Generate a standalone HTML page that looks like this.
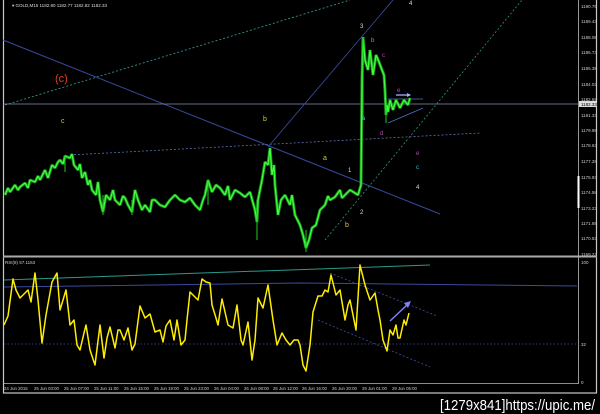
<!DOCTYPE html><html><head><style>body{margin:0;background:#000;width:600px;height:414px;overflow:hidden}svg{display:block}text{font-family:"Liberation Sans",sans-serif}</style></head><body>
<svg width="600" height="414" viewBox="0 0 600 414" xmlns="http://www.w3.org/2000/svg">
<rect width="600" height="414" fill="#000"/>
<rect x="3.5" y="-1" width="593" height="394" fill="none" stroke="#c8c8c8" stroke-width="1.2"/>
<line x1="3" y1="256.5" x2="597" y2="256.5" stroke="#aaa" stroke-width="2"/>
<line x1="578.5" y1="0" x2="578.5" y2="384" stroke="#bbb" stroke-width="0.8"/>
<line x1="3" y1="383.5" x2="578" y2="383.5" stroke="#bbb" stroke-width="0.8"/>
<line x1="578.5" y1="176" x2="578.5" y2="208" stroke="#fff" stroke-width="2"/>
<text x="12" y="7" font-size="4.5" fill="#ddd">▾ GOLD,M15  1182.80 1182.77 1182.82 1182.33</text>
<line x1="5" y1="105" x2="350" y2="0" stroke="#3aa0a0" stroke-width="0.8" stroke-dasharray="2,2"/>
<line x1="3" y1="40" x2="440" y2="214" stroke="#3a4aa0" stroke-width="1"/>
<line x1="3" y1="104" x2="578" y2="104" stroke="#8890b0" stroke-width="0.8"/>
<line x1="70" y1="155" x2="480" y2="133" stroke="#6070b0" stroke-width="0.8" stroke-dasharray="2,2"/>
<line x1="268" y1="147" x2="393" y2="0" stroke="#4050a8" stroke-width="0.8"/>
<line x1="325" y1="240" x2="522" y2="0" stroke="#2a9a6a" stroke-width="0.8" stroke-dasharray="2,2"/>
<line x1="388" y1="99" x2="423" y2="99" stroke="#5070c0" stroke-width="0.8"/>
<line x1="388" y1="123" x2="423" y2="108" stroke="#5070c0" stroke-width="0.8"/>
<line x1="396" y1="95" x2="410" y2="95" stroke="#a0b0ff" stroke-width="1.3"/><path d="M407,93 L411,95 L407,97" fill="#a0b0ff"/>
<g fill="none" stroke-linejoin="bevel">
<polyline stroke="#1a9a1a" stroke-width="3" points="5,195 8,188 10,192 15,185 18,190 20,187 25,183 28,188 30,180 35,182 38,176 40,180 45,170 48,178 52,165 55,168 58,162 60,160 63,164 65,156 70,158 72,154 74,165 78,170 80,164 82,178 85,172 88,185 90,180 92,190 96,195 98,182 100,200 103,212 106,195 110,200 113,190 115,200 120,205 123,196 125,198 128,205 132,212 135,190 138,200 142,210 145,205 150,212 152,200 155,200 160,205 165,207 170,200 175,195 180,200 185,202 190,198 195,205 200,210 203,200 205,195 208,180 212,192 216,185 220,188 225,195 228,186 230,200 235,190 240,193 245,197 250,192 255,210 257,222 258,200 262,180 265,162 268,165 270,148 272,175 274,165 275,185 278,215 281,200 285,195 290,205 292,195 295,215 300,225 303,235 306,248 309,240 312,228 316,225 320,210 325,205 328,196 330,200 335,197 340,190 342,198 345,195 350,190 355,193 358,195 361,185 362,80 363,37 365,60 368,70 370,50 373,75 376,55 379,62 382,70 384,75 385,90 386,115 387,105 388,112 390,100 393,110 396,100 400,108 404,100 408,105 410,98"/>
<polyline stroke="#44ff44" stroke-width="1.2" points="5,195 8,188 10,192 15,185 18,190 20,187 25,183 28,188 30,180 35,182 38,176 40,180 45,170 48,178 52,165 55,168 58,162 60,160 63,164 65,156 70,158 72,154 74,165 78,170 80,164 82,178 85,172 88,185 90,180 92,190 96,195 98,182 100,200 103,212 106,195 110,200 113,190 115,200 120,205 123,196 125,198 128,205 132,212 135,190 138,200 142,210 145,205 150,212 152,200 155,200 160,205 165,207 170,200 175,195 180,200 185,202 190,198 195,205 200,210 203,200 205,195 208,180 212,192 216,185 220,188 225,195 228,186 230,200 235,190 240,193 245,197 250,192 255,210 257,222 258,200 262,180 265,162 268,165 270,148 272,175 274,165 275,185 278,215 281,200 285,195 290,205 292,195 295,215 300,225 303,235 306,248 309,240 312,228 316,225 320,210 325,205 328,196 330,200 335,197 340,190 342,198 345,195 350,190 355,193 358,195 361,185 362,80 363,37 365,60 368,70 370,50 373,75 376,55 379,62 382,70 384,75 385,90 386,115 387,105 388,112 390,100 393,110 396,100 400,108 404,100 408,105 410,98"/>
</g>
<path d="M257,200 V240 M306,230 V252 M363,37 V120 M386,100 V123 M208,180 V205 M65,155 V172 M103,195 V215 M132,200 V215" stroke="#22cc22" stroke-width="1"/>
<text x="55" y="82" font-size="11" fill="#e04020">(c)</text>
<g font-size="7" fill="#cccc44"><text x="61" y="123">c</text><text x="263" y="121">b</text><text x="323" y="160">a</text><text x="345" y="227">b</text></g>
<g font-size="6" fill="#ddd"><text x="348" y="172">1</text><text x="360" y="214">2</text><text x="360" y="28">3</text><text x="416" y="189">4</text><text x="409" y="5">4</text></g>
<g font-size="6" fill="#4bb"><text x="371" y="42">b</text><text x="362" y="120">a</text><text x="416" y="169">c</text></g>
<g font-size="6" fill="#b04cb0"><text x="382" y="57">c</text><text x="380" y="135">d</text><text x="397" y="92">e</text><text x="416" y="155">e</text></g>
<g font-size="4.5" fill="#ccc">
<text x="581" y="8">1190.76</text><text x="581" y="23">1189.43</text><text x="581" y="39">1188.08</text><text x="581" y="54">1186.73</text><text x="581" y="70">1185.38</text><text x="581" y="86">1184.03</text><text x="581" y="101">1182.68</text><text x="581" y="117">1181.33</text><text x="581" y="132">1179.98</text><text x="581" y="147">1178.63</text><text x="581" y="163">1177.28</text><text x="581" y="179">1175.93</text><text x="581" y="194">1174.58</text><text x="581" y="210">1173.23</text><text x="581" y="225">1171.88</text><text x="581" y="240">1170.53</text><text x="581" y="256">1169.23</text>
</g>
<rect x="579" y="101" width="18" height="6" fill="#ddd"/><text x="581" y="106" font-size="4.5" fill="#000">1182.33</text>
<text x="5" y="264" font-size="4.5" fill="#ccc">RSI(8) 57.1163</text>
<line x1="4" y1="280" x2="430" y2="265" stroke="#2a9a8a" stroke-width="1"/>
<polyline fill="none" stroke="#3a4aa0" stroke-width="1" points="4,287 300,283 577,286"/>
<line x1="4" y1="344" x2="578" y2="344" stroke="#4050a0" stroke-width="0.7" stroke-dasharray="1.5,2"/>
<line x1="330" y1="273" x2="437" y2="316" stroke="#4050a0" stroke-width="0.8" stroke-dasharray="2,2"/>
<line x1="318" y1="320" x2="430" y2="367" stroke="#4050a0" stroke-width="0.8" stroke-dasharray="2,2"/>
<line x1="390" y1="321" x2="408" y2="304" stroke="#8080ff" stroke-width="1.5"/><path d="M404,303 L411,301 L408,308 Z" fill="#8080ff"/>
<polyline fill="none" stroke="#ffee00" stroke-width="1.5" stroke-linejoin="round" points="4,325 8,316 13,279 16,290 20,298 24,294 28,290 31,302 35,273 38,300 42,343 46,315 52,282 57,273 60,310 66,290 70,325 74,320 77,345 80,350 84,333 86,325 90,350 95,365 100,325 104,358 107,338 110,327 115,348 118,330 120,330 124,340 128,328 132,350 135,344 140,306 145,318 150,314 155,332 160,330 163,342 166,326 170,320 174,340 177,320 181,345 185,340 187,320 190,292 194,296 198,300 202,279 206,282 210,283 212,305 216,318 218,325 222,299 225,312 228,325 233,328 237,305 241,340 243,345 248,322 252,360 255,340 258,298 263,308 268,285 273,320 277,345 282,333 286,340 290,345 294,340 298,340 300,345 303,365 306,371 310,345 313,312 318,296 322,296 325,290 328,292 331,275 336,295 340,290 345,320 348,305 350,300 354,320 356,330 360,265 365,285 370,300 375,293 378,310 380,320 383,340 387,351 390,330 393,335 396,325 398,338 400,338 404,320 406,325 409,313"/>
<g font-size="4.5" fill="#ccc"><text x="581" y="264">100</text><text x="581" y="346">32</text><text x="581" y="384">0</text></g>
<g font-size="4.3" fill="#ccc">
<text x="4" y="390">24 Jun 2015</text><text x="34" y="390">25 Jun 03:00</text><text x="64" y="390">25 Jun 07:00</text><text x="94" y="390">25 Jun 11:00</text><text x="124" y="390">25 Jun 15:00</text><text x="154" y="390">25 Jun 19:00</text><text x="184" y="390">25 Jun 23:00</text><text x="214" y="390">26 Jun 04:00</text><text x="244" y="390">26 Jun 08:00</text><text x="273" y="390">26 Jun 12:00</text><text x="302" y="390">26 Jun 16:00</text><text x="332" y="390">26 Jun 20:00</text><text x="362" y="390">29 Jun 01:00</text><text x="392" y="390">29 Jun 05:00</text>
</g>
<text x="440" y="410" font-size="14.5" fill="#fff" font-family="Liberation Mono, monospace" textLength="155" lengthAdjust="spacingAndGlyphs">[1279x841]https://upic.me/</text>
</svg>
</body></html>
